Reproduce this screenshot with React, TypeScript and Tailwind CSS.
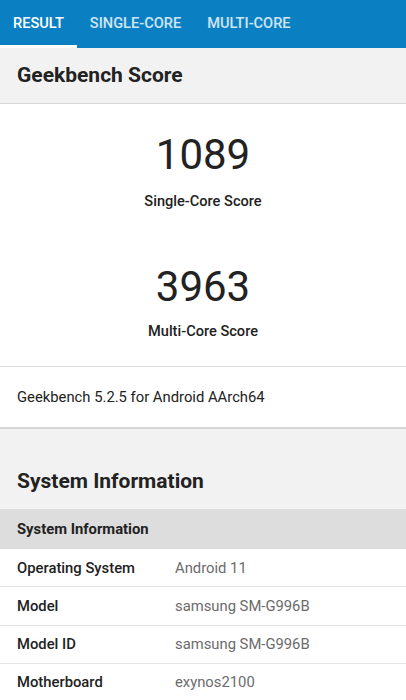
import React from "react";

const rows = [
  { label: "Operating System", value: "Android 11" },
  { label: "Model", value: "samsung SM-G996B" },
  { label: "Model ID", value: "samsung SM-G996B" },
  { label: "Motherboard", value: "exynos2100" },
];

function Tab({ label, active }: { label: string; active?: boolean }) {
  return (
    <div className="relative flex h-full items-center px-[13px]">
      <span className={active ? "text-white" : "text-white/80"}>{label}</span>
      {active && <div className="absolute bottom-0 left-0 right-0 h-[3px] bg-white" />}
    </div>
  );
}

export default function App() {
  return (
    <div
      className="w-[406px] h-[700px] overflow-hidden bg-white text-[#222]"
      style={{ fontFamily: "Roboto, 'Liberation Sans', sans-serif" }}
    >
      <div className="flex h-[48px] bg-[#0a80c3] text-[14.6px] font-medium">
        <Tab label="RESULT" active />
        <Tab label="SINGLE-CORE" />
        <Tab label="MULTI-CORE" />
      </div>

      <div className="flex h-[56px] items-center border-b border-[#d6d6d6] bg-[#f2f2f2] px-[17px]">
        <h2 className="text-[21px] font-bold">Geekbench Score</h2>
      </div>

      <div className="flex h-[263px] flex-col items-center border-b border-[#dcdcdc] pt-[21px]">
        <div className="text-[42px] leading-[60px]">1089</div>
        <div className="mt-[6px] text-[14.6px] font-medium leading-[20px]">Single-Core Score</div>
        <div className="mt-[46px] text-[42px] leading-[60px]">3963</div>
        <div className="mt-[4px] text-[14.6px] font-medium leading-[20px]">Multi-Core Score</div>
      </div>

      <div className="flex h-[62px] items-center border-b-2 border-[#d4d4d4] px-[17px] text-[14.8px]">
        Geekbench 5.2.5 for Android AArch64
      </div>

      <div className="flex h-[80px] items-end bg-[#f2f2f2] px-[17px] pb-[12px]">
        <h2 className="text-[21px] font-bold">System Information</h2>
      </div>

      <div className="flex h-[40px] items-center bg-[#dddddd] px-[17px] text-[14.8px] font-bold">
        System Information
      </div>

      {rows.map((r) => (
        <div
          key={r.label}
          className="flex h-[38.3px] items-center border-b border-[#e4e4e4] px-[17px] text-[14.8px]"
        >
          <div className="w-[158px] font-medium">{r.label}</div>
          <div className="text-[#6b6b6b]">{r.value}</div>
        </div>
      ))}
    </div>
  );
}
